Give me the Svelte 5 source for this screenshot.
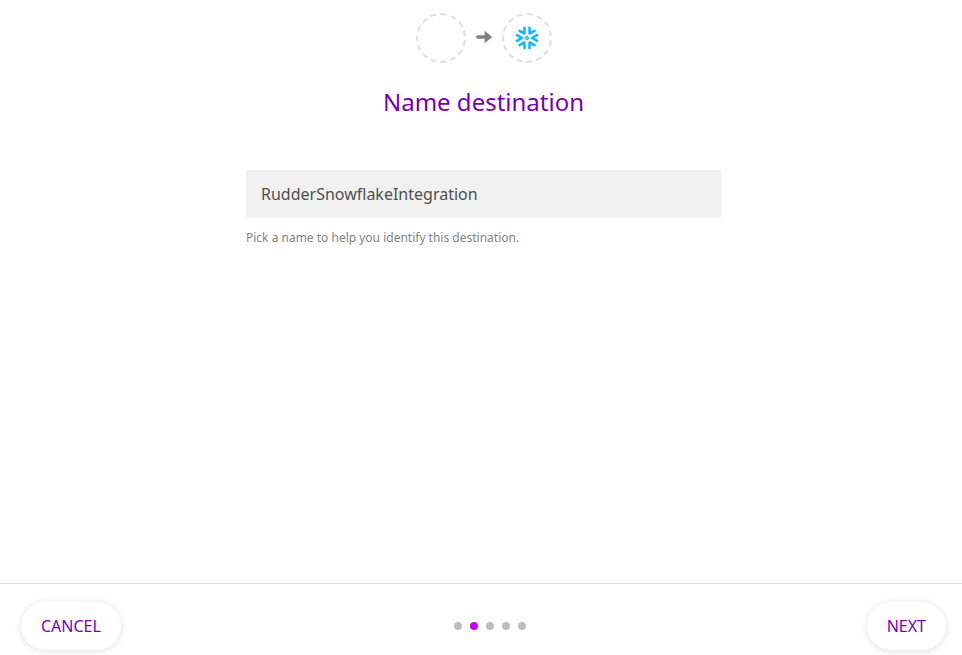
<script>
  const steps = [0, 1, 2, 3, 4];
  const current = 1;
  const arms = [0, 60, 120, 180, 240, 300];
  let name = $state('RudderSnowflakeIntegration');
</script>

<div class="page">
  <main>
    <div class="flow">
      <div class="ring"></div>
      <svg class="arrow" width="16" height="12" viewBox="0 0 16 12">
        <path d="M1.8 6H10" fill="none" stroke="#808080" stroke-width="3.5" stroke-linecap="round" />
        <path d="M8.6 1.1 Q8.6 -.1 9.6 .6 L15.6 5.4 Q16.2 6 15.6 6.6 L9.6 11.4 Q8.6 12.1 8.6 10.9Z" fill="#808080" />
      </svg>
      <div class="ring">
        <svg width="24" height="24" viewBox="-12 -12 24 24" fill="none" stroke="#0db9fb">
          {#each arms as angle}
            <path
              d="M10 -2.9 L5.2 0 L10 2.9"
              transform={`rotate(${angle})`}
              stroke-width="2.6"
              stroke-linecap="round"
              stroke-linejoin="round"
            />
          {/each}
          <path d="M0 -1.7 L1.7 0 L0 1.7 L-1.7 0Z" stroke-width="1.3" stroke-linejoin="round" />
        </svg>
      </div>
    </div>
    <h1>Name destination</h1>
    <div class="field">
      <input type="text" bind:value={name} spellcheck="false" />
      <p>Pick a name to help you identify this destination.</p>
    </div>
  </main>
  <footer>
    <button>CANCEL</button>
    <div class="dots">
      {#each steps as step}
        <span class:active={step === current}></span>
      {/each}
    </div>
    <button>NEXT</button>
  </footer>
</div>

<style>
  :global(body) {
    margin: 0;
    background: #fff;
  }
  .page {
    box-sizing: border-box;
    height: 655px;
    overflow: hidden;
    display: flex;
    flex-direction: column;
    font-family: 'Noto Sans', sans-serif;
  }
  main {
    flex: 1;
    display: flex;
    flex-direction: column;
    align-items: center;
    padding: 13px 0 0 5px;
  }
  .flow {
    display: flex;
    align-items: center;
    gap: 10px;
    padding-left: 1px;
  }
  .arrow {
    margin-top: -2px;
  }
  .ring {
    box-sizing: border-box;
    width: 50px;
    height: 50px;
    border: 2px dashed #e0e0e0;
    border-radius: 50%;
    display: flex;
    align-items: center;
    justify-content: center;
  }
  h1 {
    margin: 23px 0 0;
    font-size: 24px;
    line-height: 32px;
    font-weight: 400;
    color: #7900b0;
  }
  .field {
    width: 475px;
    margin-top: 52px;
  }
  input {
    display: block;
    box-sizing: border-box;
    width: 100%;
    height: 48px;
    padding: 0 15px;
    border: 0;
    border-radius: 2px;
    outline: 0;
    background: #f1f1f1;
    color: #4f4f4f;
    font: 16px 'Noto Sans', sans-serif;
  }
  p {
    margin: 12px 0 0;
    font-size: 12px;
    line-height: 16px;
    color: #828282;
  }
  footer {
    box-sizing: border-box;
    height: 72px;
    border-top: 1px solid #dedede;
    display: flex;
    align-items: flex-start;
    justify-content: space-between;
    padding: 18px 16px 0 21px;
  }
  button {
    height: 48px;
    padding: 0 20px;
    border: 0;
    border-radius: 24px;
    background: #fff;
    box-shadow: 0 1px 7px rgba(0, 0, 0, 0.13);
    color: #7900b0;
    font: 16px 'Noto Sans', sans-serif;
  }
  .dots {
    display: flex;
    gap: 8px;
    margin: 20px 8px 0 0;
  }
  .dots span {
    width: 8px;
    height: 8px;
    border-radius: 50%;
    background: #bdbdbd;
  }
  .dots .active {
    background: #c800ff;
  }
</style>
